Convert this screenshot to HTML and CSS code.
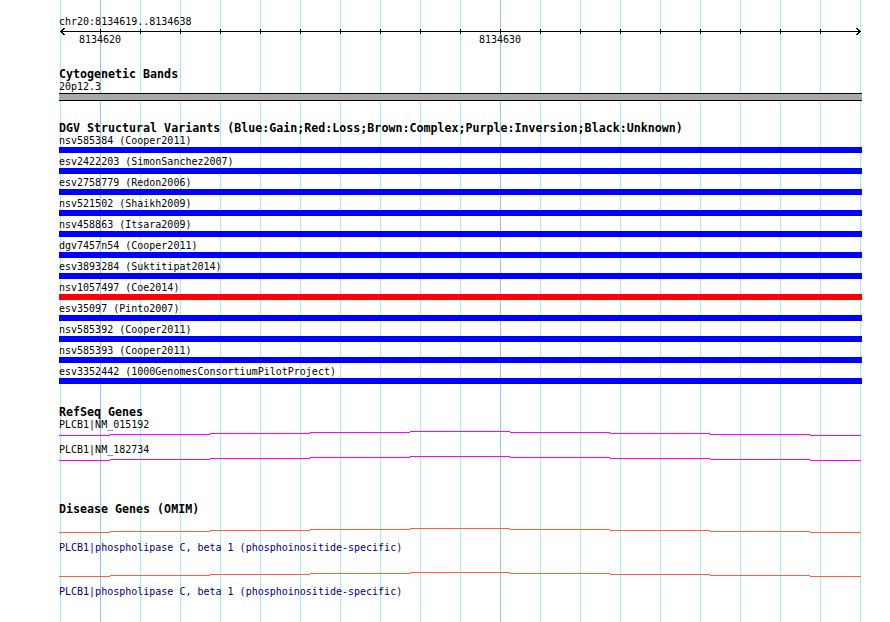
FILE: index.html
```html
<!DOCTYPE html>
<html lang="en">
<head>
<meta charset="utf-8">
<title>DGV region chr20:8134619..8134638</title>
<link rel="stylesheet" href="styles.css">
</head>
<body>
<div class="page">
  <svg class="grid" width="890" height="622" viewBox="0 0 890 622" aria-hidden="true">
    <path class="grid-minor" d="M60.5 0V622M140.5 0V622M180.5 0V622M220.5 0V622M260.5 0V622M300.5 0V622M340.5 0V622M380.5 0V622M420.5 0V622M460.5 0V622M540.5 0V622M580.5 0V622M620.5 0V622M660.5 0V622M700.5 0V622M740.5 0V622M780.5 0V622M820.5 0V622M860.5 0V622"/>
    <path class="grid-major" d="M100.5 0V622M500.5 0V622"/>
  </svg>

  <div class="tracks">
    <div class="position">chr20:8134619..8134638</div>

    <svg class="ruler" width="803" height="18" viewBox="59 27 803 18">
      <path class="axis" d="M60 31.5H861"/>
      <path class="axis" d="M64.5 28L61 31.5L64.5 35"/>
      <path class="axis" d="M856.5 28L860 31.5L856.5 35"/>
      <path class="axis" d="M100.5 29V34M140.5 29V34M180.5 29V34M220.5 29V34M260.5 29V34M300.5 29V34M340.5 29V34M380.5 29V34M420.5 29V34M460.5 29V34M500.5 29V34M540.5 29V34M580.5 29V34M620.5 29V34M660.5 29V34M700.5 29V34M740.5 29V34M780.5 29V34M820.5 29V34"/>
      <text x="100" y="43" text-anchor="middle">8134620</text>
      <text x="500" y="43" text-anchor="middle">8134630</text>
    </svg>

    <section class="track track-cyto">
      <h2 class="track-title">Cytogenetic Bands</h2>
      <div class="label">20p12.3</div>
      <div class="band"></div>
    </section>

    <section class="track track-dgv">
      <h2 class="track-title">DGV Structural Variants (Blue:Gain;Red:Loss;Brown:Complex;Purple:Inversion;Black:Unknown)</h2>
      <ul class="variants">
        <li class="variant"><div class="label">nsv585384 (Cooper2011)</div><div class="bar gain"></div></li>
        <li class="variant"><div class="label">esv2422203 (SimonSanchez2007)</div><div class="bar gain"></div></li>
        <li class="variant"><div class="label">esv2758779 (Redon2006)</div><div class="bar gain"></div></li>
        <li class="variant"><div class="label">nsv521502 (Shaikh2009)</div><div class="bar gain"></div></li>
        <li class="variant"><div class="label">nsv458863 (Itsara2009)</div><div class="bar gain"></div></li>
        <li class="variant"><div class="label">dgv7457n54 (Cooper2011)</div><div class="bar gain"></div></li>
        <li class="variant"><div class="label">esv3893284 (Suktitipat2014)</div><div class="bar gain"></div></li>
        <li class="variant"><div class="label">nsv1057497 (Coe2014)</div><div class="bar loss"></div></li>
        <li class="variant"><div class="label">esv35097 (Pinto2007)</div><div class="bar gain"></div></li>
        <li class="variant"><div class="label">nsv585392 (Cooper2011)</div><div class="bar gain"></div></li>
        <li class="variant"><div class="label">nsv585393 (Cooper2011)</div><div class="bar gain"></div></li>
        <li class="variant"><div class="label">esv3352442 (1000GenomesConsortiumPilotProject)</div><div class="bar gain"></div></li>
      </ul>
    </section>

    <section class="track track-refseq">
      <h2 class="track-title">RefSeq Genes</h2>
      <div class="genes">
        <div class="gene">
          <div class="label">PLCB1|NM_015192</div>
          <svg class="gene-line" width="803" height="14" viewBox="59 0 803 14">
            <path d="M59 5.5H110M110 4.5H210M210 3.5H310M310 2.5H410M410 1.5H510M510 2.5H610M610 3.5H710M710 4.5H810M810 5.5H861"/>
          </svg>
        </div>
        <div class="gene">
          <div class="label">PLCB1|NM_182734</div>
          <svg class="gene-line" width="803" height="14" viewBox="59 0 803 14">
            <path d="M59 5.5H110M110 4.5H210M210 3.5H310M310 2.5H410M410 1.5H510M510 2.5H610M610 3.5H710M710 4.5H810M810 5.5H861"/>
          </svg>
        </div>
      </div>
    </section>

    <section class="track track-omim">
      <h2 class="track-title">Disease Genes (OMIM)</h2>
      <div class="omim-row">
        <svg class="omim-line" width="803" height="27" viewBox="59 0 803 27">
          <path d="M59 17.5H110M110 16.5H210M210 15.5H310M310 14.5H410M410 13.5H510M510 14.5H610M610 15.5H710M710 16.5H810M810 17.5H861"/>
        </svg>
        <div class="label">PLCB1|phospholipase C, beta 1 (phosphoinositide-specific)</div>
      </div>
      <div class="omim-row">
        <svg class="omim-line" width="803" height="27" viewBox="59 0 803 27">
          <path d="M59 17.5H110M110 16.5H210M210 15.5H310M310 14.5H410M410 13.5H510M510 14.5H610M610 15.5H710M710 16.5H810M810 17.5H861"/>
        </svg>
        <div class="label">PLCB1|phospholipase C, beta 1 (phosphoinositide-specific)</div>
      </div>
    </section>
  </div>
</div>
</body>
</html>
```

FILE: styles.css
```css
* {
  box-sizing: border-box;
  margin: 0;
  padding: 0;
}

html, body {
  background: #ffffff;
}

body {
  font-family: "DejaVu Sans Mono", "Liberation Mono", monospace;
  font-size: 10px;
  color: #000000;
}

.page {
  position: relative;
  width: 890px;
  height: 622px;
  overflow: hidden;
  background: #ffffff;
}

.grid {
  position: absolute;
  left: 0;
  top: 0;
  display: block;
}

.grid path {
  fill: none;
  stroke-width: 1;
  shape-rendering: crispEdges;
}

.grid-minor {
  stroke: #aae8f0;
}

.grid-major {
  stroke: #8cc8f0;
}

.tracks {
  position: relative;
  width: 862px;
  padding: 16px 0 0 59px;
}

.position {
  height: 11px;
  line-height: 11px;
  white-space: nowrap;
}

.ruler {
  display: block;
  width: 803px;
  height: 18px;
  overflow: visible;
}

.ruler .axis {
  fill: none;
  stroke: #000000;
  stroke-width: 1;
  shape-rendering: crispEdges;
}

.ruler text {
  font-family: "DejaVu Sans Mono", "Liberation Mono", monospace;
  font-size: 10px;
  fill: #000000;
}

.track-title {
  height: 12px;
  font-size: 11.65px;
  font-weight: bold;
  line-height: 12px;
  white-space: nowrap;
}

.label {
  height: 11px;
  line-height: 11px;
  white-space: nowrap;
}

.track-cyto {
  margin-top: 23px;
}

.track-cyto .label {
  margin-top: 1px;
}

.band {
  width: 803px;
  height: 8px;
  margin-top: 1px;
  background: #aaa8aa;
  border-top: 1px solid #000000;
  border-bottom: 1px solid #000000;
}

.track-dgv {
  margin-top: 21px;
}

.variants {
  list-style: none;
  margin-top: 1px;
}

.variant {
  height: 21px;
}

.bar {
  width: 803px;
  height: 6px;
  margin-top: 1px;
}

.bar.gain {
  background: #0000ff;
}

.bar.loss {
  background: #ff0000;
}

.track-refseq {
  margin-top: 19px;
}

.genes {
  margin-top: 1px;
}

.gene-line,
.omim-line {
  display: block;
  width: 803px;
}

.gene-line {
  height: 14px;
}

.gene-line path {
  fill: none;
  stroke: #ff00ff;
  stroke-width: 1;
  shape-rendering: crispEdges;
}

.track-omim {
  margin-top: 34px;
}

.omim-row {
  margin-bottom: 6px;
}

.omim-line {
  height: 27px;
}

.omim-line path {
  fill: none;
  stroke: #ff5f3f;
  stroke-width: 1;
  shape-rendering: crispEdges;
}

.omim-row .label {
  color: #000080;
}
```
